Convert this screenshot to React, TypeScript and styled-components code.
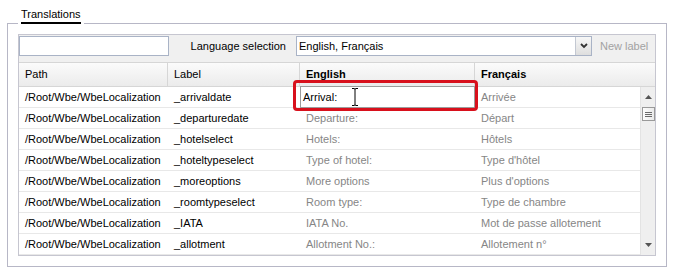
import React from "react";
import styled, { createGlobalStyle } from "styled-components";

const GlobalStyle = createGlobalStyle`
  html, body { margin: 0; padding: 0; background: #fff; }
  body {
    font-family: "Liberation Sans", Arial, sans-serif;
    font-size: 11px;
    color: #000;
  }
  * { box-sizing: border-box; }
`;

const Page = styled.div`
  width: 676px;
  height: 274px;
  padding: 7px 0 0 7px;
`;

const Frame = styled.section`
  width: 660px;
  display: flex;
  flex-direction: column;
`;

const TitleRow = styled.div`
  display: flex;
  align-items: flex-end;
  height: 17px;
`;

const EdgeLine = styled.div<{ $grow?: boolean }>`
  height: 1px;
  background: #b7b7c6;
  flex: ${(p) => (p.$grow ? "1 1 auto" : "0 0 11px")};
`;

const Tab = styled.div`
  margin: 0 3px;
  line-height: 14px;
  padding-bottom: 1px;
  border-bottom: 2px solid #000;
  color: #000;
  white-space: nowrap;
`;

const FrameBody = styled.div`
  border: 1px solid #b7b7c6;
  border-top: none;
  padding: 10px;
`;

const GridPanel = styled.div`
  border: 1px solid #c6c6d0;
  background: #fff;
`;

const Toolbar = styled.div`
  display: flex;
  align-items: flex-start;
  height: 28px;
  padding-top: 1px;
  background: #f0f0f0;
  border-bottom: 1px solid #d6d6d6;
`;

const SearchInput = styled.div`
  width: 150px;
  height: 20px;
  border: 1px solid #a9b3c6;
  background: #fff;
`;

const LangLabel = styled.div`
  width: 127px;
  height: 20px;
  display: flex;
  align-items: center;
  justify-content: flex-end;
  padding-right: 10px;
  white-space: nowrap;
`;

const Select = styled.div`
  width: 296px;
  height: 20px;
  display: flex;
  border: 1px solid #a9b3c6;
  background: #fff;
`;

const SelectValue = styled.div`
  flex: 1 1 auto;
  padding-left: 2px;
  line-height: 18px;
  white-space: nowrap;
`;

const DropButton = styled.div`
  width: 16px;
  height: 18px;
  display: flex;
  align-items: center;
  justify-content: center;
  border-left: 1px solid #c3c8d2;
  background: linear-gradient(#f7f7f7, #dedede);
`;

const NewLabel = styled.div`
  margin-left: 8px;
  line-height: 20px;
  color: #a2a2a2;
  white-space: nowrap;
`;

const COLS = "149px 132px 175px 165px";

const HeaderRow = styled.div`
  display: grid;
  grid-template-columns: ${COLS} 15px;
  height: 24px;
  border-bottom: 1px solid #d6d6d6;
  background: linear-gradient(#fbfbfb, #ebebeb);
`;

const HeaderCell = styled.div<{ $bold?: boolean; $divider?: boolean }>`
  padding-left: 6px;
  line-height: 23px;
  font-weight: ${(p) => (p.$bold ? 700 : 400)};
  border-right: ${(p) => (p.$divider ? "1px solid #d6d6d6" : "none")};
  white-space: nowrap;
`;

const Body = styled.div`
  display: flex;
`;

const Rows = styled.div`
  width: 621px;
`;

const Row = styled.div`
  display: grid;
  grid-template-columns: ${COLS};
  height: 21px;
  border-bottom: 1px solid #e8e8e8;
`;

const Cell = styled.div<{ $muted?: boolean }>`
  position: relative;
  padding-left: 6px;
  line-height: 20px;
  white-space: nowrap;
  color: ${(p) => (p.$muted ? "#868686" : "#000")};
`;

const Editor = styled.div`
  position: absolute;
  top: -1px;
  left: 0;
  width: 175px;
  height: 22px;
  border: 1px solid #9c9c9c;
  background: #fff;
  padding-left: 2px;
  line-height: 20px;
  color: #000;
`;

const Caret = styled.svg`
  position: absolute;
  left: 50px;
  top: 1px;
`;

const Highlight = styled.div`
  position: absolute;
  left: -7px;
  top: -7px;
  width: 185px;
  height: 31px;
  border: 3px solid #d8101c;
  border-radius: 4px;
  pointer-events: none;
`;

const Scrollbar = styled.div`
  width: 15px;
  display: flex;
  flex-direction: column;
  align-items: center;
  background: #efefef;
  border-left: 1px solid #e3e3e3;
`;

const ArrowBox = styled.div`
  height: 20px;
  width: 100%;
  display: flex;
  align-items: center;
  justify-content: center;
`;

const Thumb = styled.div`
  width: 13px;
  height: 14px;
  border: 1px solid #9a9a9a;
  background: linear-gradient(90deg, #fdfdfd, #eaeaea);
  display: flex;
  flex-direction: column;
  align-items: center;
  justify-content: center;
  gap: 1px;
`;

const Grip = styled.div`
  width: 7px;
  height: 1px;
  background: #6a6a6a;
`;

const Spacer = styled.div`
  flex: 1 1 auto;
`;

const rows = [
  { label: "_arrivaldate", en: "Arrival:", fr: "Arrivée", editing: true },
  { label: "_departuredate", en: "Departure:", fr: "Départ" },
  { label: "_hotelselect", en: "Hotels:", fr: "Hôtels" },
  { label: "_hoteltypeselect", en: "Type of hotel:", fr: "Type d'hôtel" },
  { label: "_moreoptions", en: "More options", fr: "Plus d'options" },
  { label: "_roomtypeselect", en: "Room type:", fr: "Type de chambre" },
  { label: "_IATA", en: "IATA No.", fr: "Mot de passe allotement" },
  { label: "_allotment", en: "Allotment No.:", fr: "Allotement n°" },
];

export default function App() {
  return (
    <>
      <GlobalStyle />
      <Page>
        <Frame>
          <TitleRow>
            <EdgeLine />
            <Tab>Translations</Tab>
            <EdgeLine $grow />
          </TitleRow>
          <FrameBody>
            <GridPanel>
              <Toolbar>
                <SearchInput />
                <LangLabel>Language selection</LangLabel>
                <Select>
                  <SelectValue>English, Français</SelectValue>
                  <DropButton>
                    <svg width="8" height="6" viewBox="0 0 8 6">
                      <path d="M1 1 L4 4 L7 1" fill="none" stroke="#333" strokeWidth="1.8" />
                    </svg>
                  </DropButton>
                </Select>
                <NewLabel>New label</NewLabel>
              </Toolbar>
              <HeaderRow>
                <HeaderCell $divider>Path</HeaderCell>
                <HeaderCell $divider>Label</HeaderCell>
                <HeaderCell $divider $bold>English</HeaderCell>
                <HeaderCell $bold>Français</HeaderCell>
                <HeaderCell />
              </HeaderRow>
              <Body>
                <Rows>
                  {rows.map((r) => (
                    <Row key={r.label}>
                      <Cell>/Root/Wbe/WbeLocalization</Cell>
                      <Cell>{r.label}</Cell>
                      <Cell $muted={!r.editing}>
                        {r.editing ? (
                          <>
                            <Editor>
                              {r.en}
                              <Caret width="8" height="18" viewBox="0 0 8 18">
                                <path
                                  d="M1 0.5 H3.2 Q4 0.5 4 1.5 V16.5 Q4 17.5 4.8 17.5 H7 M7 0.5 H4.8 Q4 0.5 4 1.5 M4 16.5 Q4 17.5 3.2 17.5 H1"
                                  fill="none"
                                  stroke="#000"
                                  strokeWidth="1"
                                />
                              </Caret>
                            </Editor>
                            <Highlight />
                          </>
                        ) : (
                          r.en
                        )}
                      </Cell>
                      <Cell $muted>{r.fr}</Cell>
                    </Row>
                  ))}
                </Rows>
                <Scrollbar>
                  <ArrowBox>
                    <svg width="7" height="4" viewBox="0 0 7 4">
                      <path d="M0 4 L3.5 0 L7 4 Z" fill="#555" />
                    </svg>
                  </ArrowBox>
                  <Thumb>
                    <Grip />
                    <Grip />
                    <Grip />
                  </Thumb>
                  <Spacer />
                  <ArrowBox>
                    <svg width="7" height="4" viewBox="0 0 7 4">
                      <path d="M0 0 L3.5 4 L7 0 Z" fill="#555" />
                    </svg>
                  </ArrowBox>
                </Scrollbar>
              </Body>
            </GridPanel>
          </FrameBody>
        </Frame>
      </Page>
    </>
  );
}
